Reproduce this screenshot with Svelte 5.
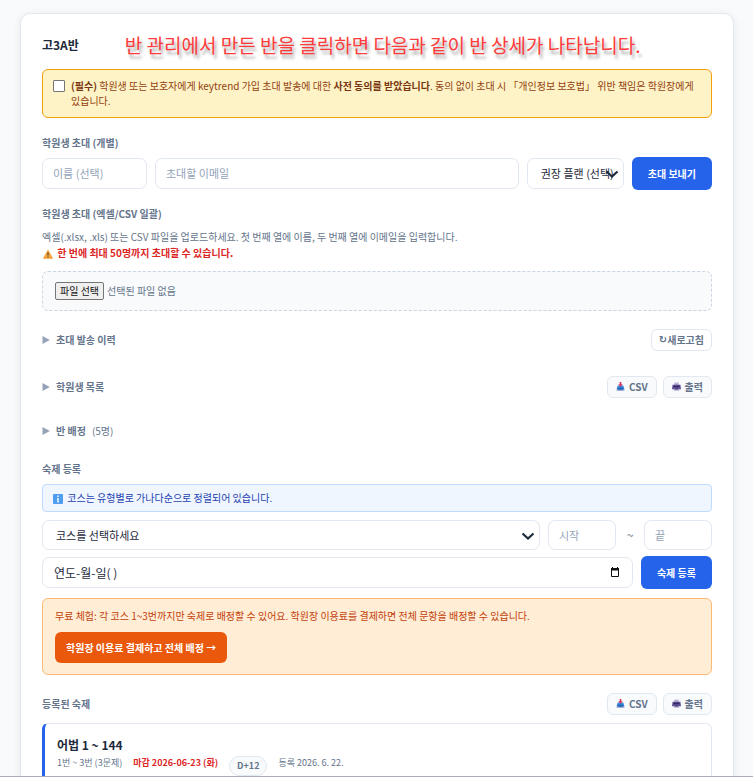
<script>
  let consent = false;
  let name = '';
  let email = '';
  let plan = '';
  let course = '';
  let start = '';
  let end = '';
  let dueDate = '';
  let fileName = '';
  let open = { history: false, students: false, assign: false };

  const homeworks = [
    {
      title: '어법 1 ~ 144',
      range: '1번 ~ 3번 (3문제)',
      due: '마감 2026-06-23 (화)',
      dday: 'D+12',
      created: '등록 2026. 6. 22.'
    }
  ];

  function toggle(key) {
    open[key] = !open[key];
  }

  function pickFile(event) {
    const file = event.target.files[0];
    fileName = file ? file.name : '';
  }
</script>

{#snippet chevron()}
  <svg class="chevron" viewBox="0 0 14 10" aria-hidden="true">
    <path d="M1.5 2.5 L7 7.5 L12.5 2.5" fill="none" stroke="#1e293b" stroke-width="2.2" />
  </svg>
{/snippet}

{#snippet arrow(isOpen)}
  <svg class="arrow" class:open={isOpen} viewBox="0 0 8 8" aria-hidden="true">
    <path d="M0.5 0 L7.8 4 L0.5 8 Z" fill="#94a3b8" />
  </svg>
{/snippet}

{#snippet exportButtons()}
  <div class="tools">
    <button class="small soft">
      <svg class="icon" viewBox="0 0 16 16" aria-hidden="true">
        <path d="M3 6 H13 L15 13 H1 Z" fill="#3b88d8" />
        <path d="M1 13 H15 V16 H1 Z" fill="#a9b0dc" />
        <path d="M3 10 H13 V14 H3 Z" fill="#2467b8" />
        <path d="M6.5 0 H9.5 V4 H12 L8 8.5 L4 4 H6.5 Z" fill="#d8325e" />
      </svg>
      CSV
    </button>
    <button class="small soft">
      <svg class="icon" viewBox="0 0 16 16" aria-hidden="true">
        <path d="M4 1 H12 V6 H4 Z" fill="#b9b4d6" />
        <path d="M1 5 H15 L16 13 H0 Z" fill="#5b4a93" />
        <path d="M3 7 H13 V9 H3 Z" fill="#33265e" />
        <path d="M4 11 H12 L13 15 H3 Z" fill="#9d93c4" />
        <path d="M5 11 H11 V13 H5 Z" fill="#43346f" />
      </svg>
      출력
    </button>
  </div>
{/snippet}

<main>
  <div class="card">
    <header>
      <h1>고3A반</h1>
      <p class="guide">반 관리에서 만든 반을 클릭하면 다음과 같이 반 상세가 나타납니다.</p>
    </header>

    <label class="consent">
      <input type="checkbox" bind:checked={consent} />
      <span>
        <b>(필수)</b> 학원생 또는 보호자에게 keytrend 가입 초대 발송에 대한 <b>사전 동의를 받았습니다</b>. 동의 없이 초대 시 「개인정보 보호법」 위반 책임은 학원장에게 있습니다.
      </span>
    </label>

    <h2 class="first">학원생 초대 (개별)</h2>
    <div class="row">
      <input class="name" type="text" placeholder="이름 (선택)" aria-label="이름" bind:value={name} />
      <input class="grow" type="email" placeholder="초대할 이메일" aria-label="이메일" bind:value={email} />
      <div class="select plan">
        <select aria-label="권장 플랜" bind:value={plan}>
          <option value="">권장 플랜 (선택)</option>
        </select>
        {@render chevron()}
      </div>
      <button class="primary">초대 보내기</button>
    </div>

    <h2 class="bulk">학원생 초대 (엑셀/CSV 일괄)</h2>
    <p>엑셀(.xlsx, .xls) 또는 CSV 파일을 업로드하세요. 첫 번째 열에 이름, 두 번째 열에 이메일을 입력합니다.</p>
    <p class="warn">
      <svg class="warn-icon" viewBox="0 0 16 16" aria-hidden="true">
        <path d="M8 1.5 L15.5 15 H0.5 Z" fill="#f2a33a" stroke="#f2a33a" stroke-linejoin="round" />
        <path d="M7 5.5 H9 L8.6 10.8 H7.4 Z M7.2 12 H8.8 V13.6 H7.2 Z" fill="#4a3b35" />
      </svg>
      한 번에 최대 50명까지 초대할 수 있습니다.
    </p>
    <div class="upload">
      <input id="bulk-file" type="file" accept=".xlsx,.xls,.csv" on:change={pickFile} />
      <label for="bulk-file"><span class="file-button">파일 선택</span> {fileName || '선택된 파일 없음'}</label>
    </div>

    <div class="fold history">
      <button class="toggle" on:click={() => toggle('history')}>
        {@render arrow(open.history)}초대 발송 이력
      </button>
      <button class="small"><span class="refresh">↻</span>새로고침</button>
    </div>
    <div class="fold students">
      <button class="toggle" on:click={() => toggle('students')}>
        {@render arrow(open.students)}학원생 목록
      </button>
      {@render exportButtons()}
    </div>
    <div class="fold assign">
      <button class="toggle" on:click={() => toggle('assign')}>
        {@render arrow(open.assign)}반 배정 <span class="count">(5명)</span>
      </button>
    </div>

    <h2 class="homework">숙제 등록</h2>
    <p class="info">
      <svg class="info-icon" viewBox="0 0 10 10" aria-hidden="true">
        <rect width="10" height="10" rx="1" fill="#4f9df0" />
        <path d="M4.3 1.5 H5.7 V2.9 H4.3 Z M4.3 4 H5.7 V8.5 H4.3 Z" fill="#fff" />
      </svg>
      코스는 유형별로 가나다순으로 정렬되어 있습니다.
    </p>
    <div class="row course">
      <div class="select grow">
        <select aria-label="코스" bind:value={course}>
          <option value="">코스를 선택하세요</option>
        </select>
        {@render chevron()}
      </div>
      <input class="num" type="text" placeholder="시작" aria-label="시작 번호" bind:value={start} />
      <span class="tilde">~</span>
      <input class="num" type="text" placeholder="끝" aria-label="끝 번호" bind:value={end} />
    </div>
    <div class="row">
      <div class="date grow">
        <input type="text" placeholder="연도-월-일( )" aria-label="마감일" bind:value={dueDate} />
        <button class="calendar" aria-label="날짜 선택">
          <svg viewBox="0 0 10 10" aria-hidden="true">
            <path d="M1.5 2 H8.5 V9.5 H1.5 Z" fill="none" stroke="#111" />
            <path d="M1 1 H9 V3.4 H1 Z M2 0 H3 V1 H2 Z M7 0 H8 V1 H7 Z" fill="#111" />
          </svg>
        </button>
      </div>
      <button class="primary">숙제 등록</button>
    </div>

    <div class="trial">
      <p>무료 체험: 각 코스 1~3번까지만 숙제로 배정할 수 있어요. 학원장 이용료를 결제하면 전체 문항을 배정할 수 있습니다.</p>
      <button class="pay">학원장 이용료 결제하고 전체 배정 →</button>
    </div>

    <div class="fold registered">
      <h2>등록된 숙제</h2>
      {@render exportButtons()}
    </div>
    {#each homeworks as hw}
      <article>
        <h3>{hw.title}</h3>
        <div class="meta">
          <span>{hw.range}</span>
          <span class="due">{hw.due}</span>
          <span class="dday">{hw.dday}</span>
          <span>{hw.created}</span>
        </div>
      </article>
    {/each}
  </div>
</main>

<style>
  :global(body) {
    background: #f8fafc;
  }
  main {
    box-sizing: border-box;
    height: 100vh;
    overflow: hidden;
    padding: 13px 19px 0 20px;
    border-bottom: 1px solid #a9adbc;
    font-family: "Noto Sans CJK KR", "Noto Sans", sans-serif;
    font-size: 10px;
    line-height: 16px;
    color: #64748b;
  }
  h1, h2, h3, p {
    margin: 0;
  }
  input, select, button {
    box-sizing: border-box;
    font-family: inherit;
    font-size: 10px;
    margin: 0;
  }
  button {
    cursor: pointer;
    white-space: nowrap;
  }
  .card {
    min-height: 900px;
    padding: 20px 21px;
    background: #fff;
    border: 1px solid #e2e8f0;
    border-radius: 10px;
    box-shadow: 0 2px 10px rgba(15, 23, 42, 0.08);
  }
  header {
    display: flex;
    align-items: center;
    gap: 46px;
    height: 22px;
    margin-bottom: 13px;
  }
  h1 {
    font-size: 12px;
    color: #1e293b;
    white-space: nowrap;
  }
  .guide {
    font-size: 19px;
    line-height: 22px;
    color: #ff3b3b;
    white-space: nowrap;
    text-shadow: 2px 4px 3px rgba(0, 0, 0, 0.35);
  }
  .consent {
    display: flex;
    gap: 6px;
    padding: 8px 10px 9px;
    line-height: 15px;
    color: #92400e;
    background: #fef3c7;
    border: 1px solid #f59e0b;
    border-radius: 6px;
  }
  .consent input {
    flex: none;
    width: 12px;
    height: 12px;
    margin-top: 2px;
    appearance: none;
    background: #fff;
    border: 1px solid #767676;
    border-radius: 1px;
  }
  .consent input:checked {
    background: #2563eb;
  }
  .consent b {
    color: #78350f;
  }
  h2 {
    font-size: 10px;
    line-height: 16px;
    color: #64748b;
  }
  .first {
    margin: 17px 0 6px;
  }
  .row {
    display: flex;
    align-items: center;
    gap: 8px;
  }
  .grow {
    flex: 1;
    min-width: 0;
  }
  input[type="text"], input[type="email"], select {
    height: 31px;
    padding: 0 10px 1px;
    font-size: 11px;
    color: #1e293b;
    background: #fff;
    border: 1px solid #e2e8f0;
    border-radius: 7px;
  }
  input::placeholder {
    color: #94a3b8;
    opacity: 1;
  }
  .name {
    width: 105px;
  }
  .select, .date {
    position: relative;
  }
  select {
    display: block;
    width: 100%;
    padding: 0 13px 1px;
    appearance: none;
  }
  .plan {
    width: 97px;
  }
  .plan select {
    padding-right: 0;
  }
  .chevron {
    position: absolute;
    top: 11px;
    right: 5px;
    width: 14px;
    height: 10px;
    pointer-events: none;
  }
  .primary {
    height: 33px;
    padding: 0 16px;
    font-weight: bold;
    color: #fff;
    background: #2563eb;
    border: none;
    border-radius: 6px;
  }
  .bulk {
    margin: 16px 0 7px;
  }
  .warn {
    font-weight: bold;
    color: #dc2626;
  }
  .warn-icon {
    width: 10px;
    height: 10px;
    margin: 0 2px 0 1px;
    vertical-align: -2px;
  }
  .upload {
    position: relative;
    padding: 10px 12px;
    margin-top: 10px;
    background: #f8fafc;
    border: 1px dashed #cbd5e1;
    border-radius: 6px;
  }
  .upload input {
    position: absolute;
    width: 1px;
    height: 1px;
    opacity: 0;
  }
  .upload label {
    display: flex;
    align-items: center;
    gap: 3px;
    height: 18px;
  }
  .file-button {
    padding: 0 4px;
    color: #111;
    background: #efefef;
    border: 1px solid #767676;
    border-radius: 2px;
  }
  .fold {
    display: flex;
    align-items: center;
    justify-content: space-between;
    height: 22px;
  }
  .history {
    margin-top: 18px;
  }
  .students {
    margin-top: 25px;
  }
  .assign {
    margin-top: 22px;
  }
  .toggle {
    display: flex;
    align-items: center;
    padding: 0 0 2px;
    font-weight: bold;
    color: #64748b;
    background: none;
    border: none;
  }
  .arrow {
    width: 8px;
    height: 8px;
    margin: 2px 6px 0 0;
  }
  .arrow.open {
    transform: rotate(90deg);
  }
  .count {
    margin-left: 6px;
    font-weight: normal;
  }
  .tools {
    display: flex;
    gap: 6px;
  }
  .small {
    display: flex;
    align-items: center;
    height: 22px;
    padding: 0 7px 1px;
    font-weight: bold;
    color: #64748b;
    background: #fff;
    border: 1px solid #e2e8f0;
    border-radius: 6px;
  }
  .soft {
    padding: 0 8px 1px;
    background: #f8fafc;
  }
  .icon {
    width: 9px;
    height: 9px;
    margin-right: 4px;
  }
  .refresh {
    font-family: "DejaVu Sans", sans-serif;
  }
  .homework {
    margin: 19px 0 7px;
  }
  .info {
    padding: 5px 10px;
    color: #1e40af;
    background: #eff6ff;
    border: 1px solid #bfdbfe;
    border-radius: 4px;
  }
  .info-icon {
    width: 10px;
    height: 10px;
    margin-right: 2px;
    vertical-align: -2px;
  }
  .course {
    margin: 8px 0 6px;
  }
  .course select, .course .num {
    height: 30px;
  }
  .num {
    width: 68px;
  }
  .tilde {
    width: 12px;
    font-size: 12px;
    text-align: center;
  }
  .date input[type="text"] {
    display: block;
    width: 100%;
    padding: 0 11px;
    font-size: 12px;
  }
  .date input::placeholder {
    color: #1e293b;
  }
  .calendar {
    position: absolute;
    top: 10px;
    right: 13px;
    width: 10px;
    height: 10px;
    padding: 0;
    background: none;
    border: none;
  }
  .calendar svg {
    display: block;
  }
  .trial {
    padding: 9px 12px 11px;
    margin-top: 9px;
    color: #c2410c;
    background: #ffedd5;
    border: 1px solid #fdba74;
    border-radius: 6px;
  }
  .pay {
    height: 31px;
    padding: 0 11px;
    margin-top: 8px;
    font-weight: bold;
    color: #fff;
    background: #ea580c;
    border: none;
    border-radius: 6px;
  }
  .registered {
    margin: 18px 0 8px;
  }
  article {
    min-height: 60px;
    padding: 12px;
    border: 1px solid #e2e8f0;
    border-left: 3px solid #2563eb;
    border-radius: 6px;
  }
  h3 {
    font-size: 12px;
    line-height: 18px;
    color: #1e293b;
  }
  .meta {
    display: flex;
    align-items: flex-start;
    gap: 11px;
    font-size: 9px;
    line-height: 18px;
  }
  .due {
    font-weight: bold;
    color: #dc2626;
  }
  .dday {
    padding: 0 7px;
    margin-top: 2px;
    font-weight: bold;
    background: #f8fafc;
    border: 1px solid #e2e8f0;
    border-radius: 10px;
  }
</style>
